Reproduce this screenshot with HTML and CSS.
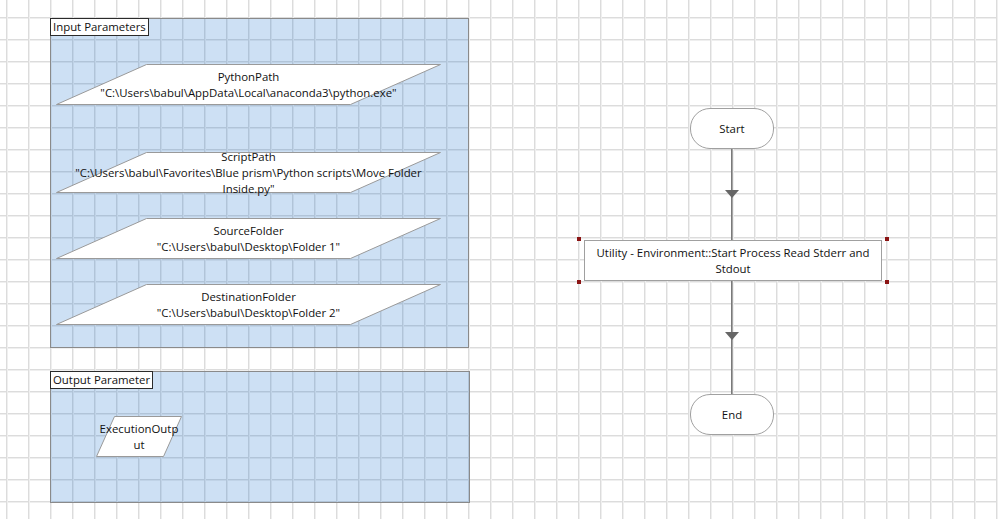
FILE: index.html
```html
<!DOCTYPE html>
<html lang="en">
<head>
<meta charset="utf-8">
<title>Process Diagram</title>
<link rel="stylesheet" href="styles.css">
</head>
<body>
<div class="canvas">

  <!-- Input parameters group -->
  <div class="region region-input">
    <div class="region-label">Input Parameters</div>
  </div>

  <div class="data-node data-wide node-python">
    <svg class="shape" viewBox="0 0 385 41" width="385" height="41"><polygon points="90.5,0.5 384.5,0.5 294.5,40.5 0.5,40.5"/></svg>
    <div class="node-text">PythonPath<br>"C:\Users\babul\AppData\Local\anaconda3\python.exe"</div>
  </div>

  <div class="data-node data-wide node-script">
    <svg class="shape" viewBox="0 0 385 41" width="385" height="41"><polygon points="90.5,0.5 384.5,0.5 294.5,40.5 0.5,40.5"/></svg>
    <div class="node-text">ScriptPath<br>"C:\Users\babul\Favorites\Blue prism\Python scripts\Move Folder Inside.py"</div>
  </div>

  <div class="data-node data-wide node-source">
    <svg class="shape" viewBox="0 0 385 41" width="385" height="41"><polygon points="90.5,0.5 384.5,0.5 294.5,40.5 0.5,40.5"/></svg>
    <div class="node-text">SourceFolder<br>"C:\Users\babul\Desktop\Folder 1"</div>
  </div>

  <div class="data-node data-wide node-dest">
    <svg class="shape" viewBox="0 0 385 41" width="385" height="41"><polygon points="90.5,0.5 384.5,0.5 294.5,40.5 0.5,40.5"/></svg>
    <div class="node-text">DestinationFolder<br>"C:\Users\babul\Desktop\Folder 2"</div>
  </div>

  <!-- Output parameter group -->
  <div class="region region-output">
    <div class="region-label">Output Parameter</div>
  </div>

  <div class="data-node data-small node-output">
    <svg class="shape" viewBox="0 0 86 41" width="86" height="41"><polygon points="18.5,0.5 85.5,0.5 67.5,40.5 0.5,40.5"/></svg>
    <div class="node-text node-text-break">ExecutionOutput</div>
  </div>

  <!-- Main flow -->
  <div class="link"></div>
  <div class="arrow arrow-1"></div>
  <div class="arrow arrow-2"></div>

  <div class="terminal node-start">Start</div>

  <div class="action node-action">
    <div class="action-text">Utility - Environment::Start Process Read Stderr and Stdout</div>
    <span class="handle handle-tl"></span>
    <span class="handle handle-tr"></span>
    <span class="handle handle-bl"></span>
    <span class="handle handle-br"></span>
  </div>

  <div class="terminal node-end">End</div>

</div>
</body>
</html>
```

FILE: styles.css
```css
html, body {
  margin: 0;
  padding: 0;
}

body {
  font-family: "Open Sans", "Noto Sans", sans-serif;
  font-size: 11.4px;
  color: #111;
}

/* Drawing surface with a 22px grid */
.canvas {
  position: relative;
  width: 998px;
  height: 519px;
  overflow: hidden;
  background-color: #fff;
  background-image:
    linear-gradient(to right, #dcdcdc 0 1px, #efefef 1px 2px, transparent 2px),
    linear-gradient(to bottom, #dcdcdc 0 1px, #efefef 1px 2px, transparent 2px);
  background-size: 22px 22px;
  background-position: 6px 17px;
}

/* Group blocks: translucent blue so the grid shows through */
.region {
  position: absolute;
  left: 50px;
  width: 419px;
  box-sizing: border-box;
  background: rgba(5, 100, 200, 0.2);
  border: 1px solid #8a8a8a;
}

.region-input {
  top: 18px;
  height: 330px;
}

.region-output {
  top: 371px;
  height: 132px;
  width: 420px;
}

.region-label {
  position: absolute;
  left: -1px;
  top: -1px;
  padding: 0 2px 0 2px;
  height: 16px;
  line-height: 16px;
  background: #fff;
  border: 1px solid #2b2b2b;
  color: #111;
  white-space: nowrap;
}

/* Data items (parallelograms) */
.data-node {
  position: absolute;
  display: flex;
  align-items: center;
  justify-content: center;
  height: 41px;
}

.data-node .shape {
  position: absolute;
  left: 0;
  top: 0;
  overflow: visible;
}

.data-node .shape polygon {
  fill: #fff;
  stroke: #9a9a9a;
  stroke-width: 1;
}

.node-text {
  position: relative;
  text-align: center;
  line-height: 16px;
}

.data-wide {
  left: 56px;
  width: 385px;
}

.data-wide .node-text {
  width: 352px;
}

.node-python { top: 64px; }
.node-script { top: 152px; }
.node-source { top: 218px; }
.node-dest   { top: 284px; }

.data-small {
  left: 96px;
  top: 416px;
  width: 86px;
}

.node-text-break {
  width: 80px;
  word-break: break-all;
  line-height: 16px;
}

/* Flow connector and arrow heads */
.link {
  position: absolute;
  left: 731px;
  top: 148px;
  width: 1px;
  height: 247px;
  background: #7a7a7a;
  border-right: 1px solid #a6a6a6;
}

.arrow {
  position: absolute;
  left: 725px;
  width: 0;
  height: 0;
  border-left: 7px solid transparent;
  border-right: 7px solid transparent;
  border-top: 8px solid #666;
}

.arrow-1 { top: 190px; }
.arrow-2 { top: 332px; }

/* Start / End terminators */
.terminal {
  position: absolute;
  left: 690px;
  width: 84px;
  height: 41px;
  box-sizing: border-box;
  border: 1px solid #a0a0a0;
  border-radius: 20px;
  background: #fff;
  display: flex;
  align-items: center;
  justify-content: center;
}

.node-start { top: 108px; }
.node-end   { top: 394px; }

/* Action stage */
.action {
  position: absolute;
  left: 584px;
  top: 240px;
  width: 298px;
  height: 41px;
  box-sizing: border-box;
  border: 1px solid #a0a0a0;
  background: #fff;
  display: flex;
  align-items: center;
  justify-content: center;
}

.action-text {
  width: 280px;
  text-align: center;
  line-height: 16px;
}

/* Selection handles */
.handle {
  position: absolute;
  width: 4px;
  height: 4px;
  background: #8b1414;
}

.handle-tl { left: -8px; top: -4px; }
.handle-tr { right: -8px; top: -4px; }
.handle-bl { left: -8px; bottom: -4px; }
.handle-br { right: -8px; bottom: -4px; }
```
